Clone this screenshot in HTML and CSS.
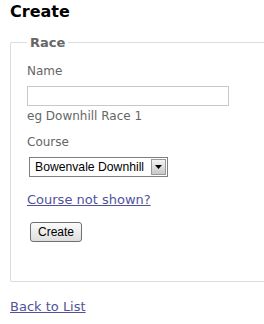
FILE: index.html
```html
<!DOCTYPE html>
<html lang="en">
  <head>
    <meta charset="UTF-8" />
    <meta name="viewport" content="width=device-width, initial-scale=1.0" />
    <title>Create</title>
    <link rel="stylesheet" href="styles.css">
  </head>
  <body>
    <h2 class="page-title">Create</h2>

    <form class="race-form">
      <fieldset class="race-fieldset">
        <legend>Race</legend>

        <div class="field">
          <label class="field-label" for="name">Name</label>
          <input class="text-box" id="name" type="text" />
          <div class="hint">eg Downhill Race 1</div>
        </div>

        <div class="field">
          <label class="field-label">Course</label>
          <div class="select-box">
            <span class="select-value">Bowenvale Downhill</span>
            <span class="select-arrow">
              <svg width="7" height="4" viewBox="0 0 7 4"><path d="M0 0h7L3.5 4z" fill="#000" /></svg>
            </span>
          </div>
        </div>

        <a class="link course-link" href="#">Course not shown?</a>

        <div class="actions">
          <button class="btn" type="button">Create</button>
        </div>
      </fieldset>
    </form>

    <div class="back">
      <a class="link" href="#">Back to List</a>
    </div>
  </body>
</html>
```

FILE: styles.css
```css
body {
  margin: 0;
  padding: 0 0 0 10px;
  font-family: "DejaVu Sans", Verdana, sans-serif;
  background-color: #fff;
  color: #666;
}

.page-title {
  margin: 3px 0 0;
  font-size: 16px;
  line-height: 18px;
  color: #000;
}

.race-form {
  margin-top: 14px;
}

.race-fieldset {
  margin: 0;
  padding: 14px 0 39px 16px;
  border: 1px solid #dcdcdc;
  border-right: 0;
  border-radius: 2px 0 0 2px;
}

.race-fieldset legend {
  padding: 0 3px;
  font-size: 13px;
  line-height: 15px;
  font-weight: bold;
  color: #666;
}

.field-label {
  display: block;
  font-size: 12px;
  line-height: 15px;
}

.text-box {
  display: block;
  box-sizing: border-box;
  width: 202px;
  height: 20px;
  margin: 7px 0 0;
  padding: 0 2px;
  border: 1px solid #c8c8c8;
  background-color: #fff;
}

.hint {
  margin-top: 3px;
  font-size: 12px;
  line-height: 15px;
}

.field + .field {
  margin-top: 11px;
}

.select-box {
  display: flex;
  align-items: center;
  box-sizing: border-box;
  width: 139px;
  height: 20px;
  margin: 7px 0 0 2px;
  padding: 0 1px 0 5px;
  border: 1px solid #7f7f7f;
  background-color: #fff;
}

.select-value {
  flex: 1;
  font-family: "Liberation Sans", Arial, sans-serif;
  font-size: 12.2px;
  color: #000;
  white-space: nowrap;
}

.select-arrow {
  display: flex;
  align-items: center;
  justify-content: center;
  box-sizing: border-box;
  width: 15px;
  height: 16px;
  border: 1px solid #9a9a9a;
  background: linear-gradient(#f4f4f4, #c8c8c8);
}

.link {
  font-size: 13px;
  line-height: 16px;
  color: #52529b;
  text-decoration: underline;
}

.course-link {
  display: inline-block;
  margin-top: 15px;
}

.actions {
  margin-top: 13px;
}

.btn {
  box-sizing: border-box;
  width: 52px;
  height: 20px;
  margin-left: 3px;
  padding: 0;
  font-family: "Liberation Sans", Arial, sans-serif;
  font-size: 12px;
  color: #000;
  border: 1px solid #707070;
  border-radius: 3px;
  background: linear-gradient(#fbfbfb, #dedede);
}

.back {
  margin-top: 14px;
}
```
